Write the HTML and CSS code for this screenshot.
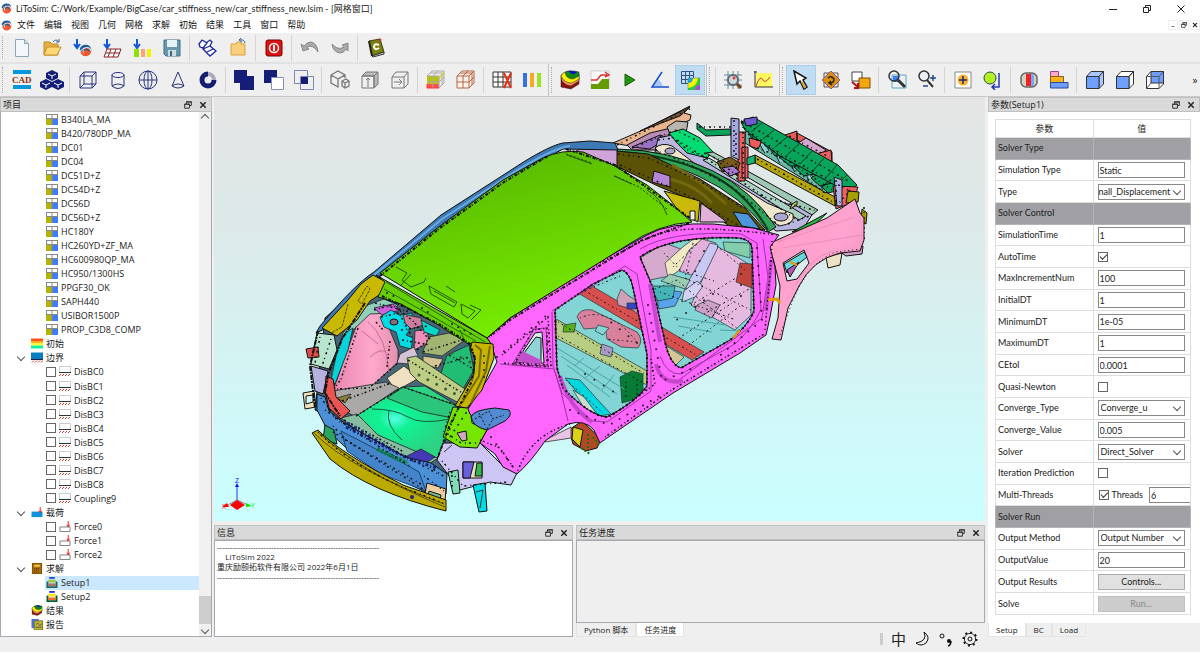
FILE: index.html
```html
<!DOCTYPE html>
<html lang="zh-CN">

<head>
    <meta charset="UTF-8">
    <title>LiToSim</title>
    <link rel="stylesheet" href="styles.css">
</head>

<body>
    <!-- shared icons -->
    <svg class="defs" aria-hidden="true">
        <symbol id="logo" viewBox="0 0 20 20">
            <path d="M2 10 Q3 19 11 19 Q19 18 19 9 L15 13 Q10 17 6 13 L5 9Z" fill="#f0562b" />
            <path d="M1 8 Q3 1 10 1 Q18 1 19 9 Q17 4 12 5 Q7 5 7 9 L4 12Z" fill="#1d5c9e" />
            <path d="M2 11 Q7 4 15 6" stroke="#fff" stroke-width="1.5" fill="none" />
            <circle cx="12" cy="11" r="5" fill="#f0562b" />
            <path d="M8 10 Q12 6 16 11" stroke="#1d5c9e" stroke-width="2" fill="none" />
        </symbol>
        <symbol id="restore" viewBox="0 0 8 8">
            <path d="M2.5 2.5V.8H7.3V4.5H5.5M.7 3H5.4V7.2H.7Z" fill="none" stroke="#333" />
            <path d="M2 1H8M.5 3.3H6" stroke="#333" />
        </symbol>
        <symbol id="close" viewBox="0 0 8 8">
            <path d="M1.3 1.3L6.7 6.7M6.7 1.3L1.3 6.7" stroke="#222" stroke-width="1.5" />
        </symbol>
        <symbol id="material" viewBox="0 0 12 11">
            <rect width="12" height="11" fill="#fff" />
            <rect y="5" width="6" height="6" fill="#b3b300" />
            <rect x="6" y="5" width="6" height="6" fill="#3d7cff" />
            <path d="M0 .5H12M0 4.5H12M.5 0V5M6 0V11M11.5 0V5" stroke="#888" />
        </symbol>
        <symbol id="bc" viewBox="0 0 12 11">
            <path d="M.5 7V.5H11.5V7" fill="#fff" stroke="#ccc" />
            <path d="M0 6.5H12" stroke="#333" />
            <path d="M0 10L2 8M3 10L5 8M6 10L8 8M9 10L11 8" stroke="#d33" />
        </symbol>
        <symbol id="force" viewBox="0 0 12 12">
            <path d="M.5 6.5H11.5V11.5H.5Z" fill="#fff" stroke="#777" />
            <path d="M9.5 0V6M8 4L9.5 6.5L11 4" stroke="#e11" fill="none" />
        </symbol>
        <symbol id="result" viewBox="0 0 20 20">
            <path d="M1 7L19 8V14L11 19L1 17Z" fill="#8a1208" stroke="#222" stroke-width=".5" />
            <path d="M1 7Q2 15 11 16L19 11V5L10 1L1 5Z" fill="#ff9060" stroke="#222" stroke-width=".5" />
            <path d="M1 6Q4 13 12 13L19 9V4L10 1L3 3Z" fill="#fff200" stroke="#222" stroke-width=".5" />
            <path d="M5 2Q6 9 13 9L19 6V2L14 1H8Z" fill="#118a11" stroke="#222" stroke-width=".5" />
            <path d="M9 1Q12 7 17 2L12 1Z" fill="#0909dd" />
        </symbol>
        <symbol id="setup1" viewBox="0 0 12 12">
            <rect x="3" width="6" height="2" fill="#2242dd" />
            <rect x="2" y="3" width="8" height="3" fill="#9bc83c" />
            <rect x="2" y="7" width="8" height="3" fill="#b86d60" />
            <path d="M1 5V11H11V5" fill="none" stroke="#176a62" stroke-width="2" />
        </symbol>
        <symbol id="setup2" viewBox="0 0 12 12">
            <rect x="3" width="6" height="2" fill="#2a2aff" />
            <rect x="2" y="3" width="8" height="3" fill="#f1ea00" />
            <rect x="2" y="7" width="8" height="3" fill="#ff6a20" />
            <path d="M1 5V11H11V5" fill="none" stroke="#0b5e32" stroke-width="2" />
        </symbol>
    </svg>

    <header class="titlebar">
        <svg class="app-icon"><use href="#logo" /></svg>
        <h1>LiToSim: C:/Work/Example/BigCase/car_stiffness_new/car_stiffness_new.lsim - [网格窗口]</h1>
        <div class="window-buttons">
            <button aria-label="最小化"><svg viewBox="0 0 8 8"><path d="M0 4.5H8" stroke="#222" /></svg></button>
            <button aria-label="还原"><svg viewBox="0 0 8 8"><path d="M.5 2.5H5.5V7.5H.5ZM2.5 2V.5H7.5V5.5H6" fill="none" stroke="#222" /></svg></button>
            <button aria-label="关闭"><svg viewBox="0 0 8 8"><path d="M.5 .5L7.5 7.5M7.5 .5L.5 7.5" stroke="#222" /></svg></button>
        </div>
    </header>

    <nav class="menubar">
        <svg class="app-icon"><use href="#logo" /></svg>
        <a href="#">文件</a>
        <a href="#">编辑</a>
        <a href="#">视图</a>
        <a href="#">几何</a>
        <a href="#">网格</a>
        <a href="#">求解</a>
        <a href="#">初始</a>
        <a href="#">结果</a>
        <a href="#">工具</a>
        <a href="#">窗口</a>
        <a href="#">帮助</a>
        <div class="mdi-buttons">
            <button aria-label="最小化子窗口"><svg viewBox="0 0 8 8"><path d="M2 6H6" stroke="#456" /></svg></button>
            <button aria-label="还原子窗口"><svg><use href="#restore" /></svg></button>
            <button aria-label="关闭子窗口"><svg><use href="#close" /></svg></button>
        </div>
    </nav>

    <div class="toolbars file-tools">
        <div class="toolbar">
            <button aria-label="新建"><svg viewBox="0 0 20 20"><path d="M3.500 1.500H12.500L16.500 5.500V18.500H3.500Z" fill="#f4f8fb" stroke="#8ba6b9" /><path d="M12.500 1.500V5.500H16.500" fill="#cfdfe9" stroke="#8ba6b9" /></svg></button>
            <button aria-label="打开"><svg viewBox="0 0 20 20"><path d="M2 17V4H8L10 6H16V17Z" fill="#e6b040" stroke="#c08a28" /><path d="M2 17L5 9H19L15 17Z" fill="#ffd876" stroke="#c98f2a" /><path d="M11 4Q14 0 17 4M17 1V4H14" fill="none" stroke="#34689f" /></svg></button>
            <button aria-label="导入模型"><svg viewBox="0 0 20 20"><path d="M5 1V9M2 6L5 10L8 6" fill="none" stroke="#1455d9" stroke-width="2" /><svg x="7" y="6" width="13" height="13"><use href="#logo" /></svg></svg></button>
            <button aria-label="导入网格"><svg viewBox="0 0 20 20"><path d="M5 1V9M2 6L5 10L8 6" fill="none" stroke="#1455d9" stroke-width="2" /><path d="M5 11H19L16 19H2ZM4 15H18M9 11L6 19M14 11L11 19" fill="#fff" stroke="#8a2222" /></svg></button>
            <button aria-label="导入结果"><svg viewBox="0 0 20 20"><path d="M5 1V9M2 6L5 10L8 6" fill="none" stroke="#1455d9" stroke-width="2" /><path d="M2 11H7V19H2Z" fill="#8ee000" /><path d="M9 11H13V19H9Z" fill="#ffa07a" /><path d="M15 11H19V19H15Z" fill="#f7f000" /></svg></button>
            <button aria-label="保存"><svg viewBox="0 0 20 20"><path d="M2 2H18V18H4L2 16Z" fill="#6799ad" stroke="#3d7087" /><path d="M5 2H15V9H5Z" fill="#e5f2f7" /><path d="M6 12H14V18H6Z" fill="#cfdde3" /><path d="M8 13H10V18H8Z" fill="#3d6478" /></svg></button>
            <i class="sep"></i>
            <button aria-label="清理"><svg viewBox="0 0 20 20"><path d="M7 6L12 2L14 4L12 8L18 13L12 18L5 11Z" fill="#fff" stroke="#1d2a9c" stroke-width="1.300" /><path d="M1 6L4 2L9 5L5 10L2 9ZM5 11L12 8M9 14L15 11" fill="#fff" stroke="#1d2a9c" stroke-width="1.300" /></svg></button>
            <button aria-label="工作目录"><svg viewBox="0 0 20 20"><path d="M3 6H8L9 4H13V6H17V17H3Z" fill="#f7cf7d" stroke="#d9a03f" /><path d="M17 5Q16 1 12 2M13 0L11 2L14 4" fill="none" stroke="#2d5e95" /></svg></button>
            <i class="sep"></i>
            <button aria-label="退出"><svg viewBox="0 0 20 20"><rect x="2" y="2" width="16" height="16" rx="2" fill="#e01010" stroke="#6d0505" /><circle cx="10" cy="10" r="4.500" fill="none" stroke="#fff" stroke-width="1.500" /><path d="M10 7V13" stroke="#fff" stroke-width="2" /></svg></button>
            <i class="sep"></i>
            <button aria-label="撤销"><svg viewBox="0 0 20 20"><path d="M1 6L3 13L9 11L7 9Q13 6 18 14Q17 5 11 4Q7 4 4 8Z" fill="#aaa" stroke="#888" /></svg></button>
            <button aria-label="重做"><svg viewBox="0 0 20 20"><path d="M18 5L12 7L14 9Q8 13 2 6Q3 14 10 15Q14 15 16 11L18 13Z" fill="#aaa" stroke="#888" /></svg></button>
            <i class="sep"></i>
            <button aria-label="计算器"><svg viewBox="0 0 20 20"><path d="M3 3L14 1L18 14L6 18Z" fill="#77810c" stroke="#3d4208" /><path d="M6 18L18 14V16L7 19Z" fill="#ddd" stroke="#333" /><path d="M3 3L6 18" stroke="#222" stroke-width="2" /><path d="M13 7Q8 5 8 9Q9 13 13 10" stroke="#fff" stroke-width="2" fill="none" /><circle cx="14" cy="2" r="1.500" fill="#c33" /></svg></button>
        </div>
    </div>

    <div class="toolbars model-tools">
        <div class="toolbar">
            <button aria-label="CAD"><svg viewBox="0 0 20 20"><path d="M1 0H19V4H1ZM1 15H19V19H1Z" fill="#0797dd" /><text class="cad" x="0" y="13">CAD</text></svg></button>
            <button aria-label="装配"><svg class="wide" viewBox="0 0 24 20"><g id="cube"><path d="M12 0L18 3V8L12 11L6 8V3Z" fill="#141d78" /><path d="M8 4L12 6L16 4M12 6V9" stroke="#fff" fill="none" /></g><use href="#cube" x="-6" y="9" /><use href="#cube" x="6" y="9" /></svg></button>
            <i class="sep"></i>
            <button aria-label="长方体"><svg viewBox="0 0 20 20"><path d="M2 6H14V18H2ZM6 2H18V14H6ZM2 6L6 2M14 6L18 2M14 18L18 14M2 18L6 14" fill="none" stroke="#28327f" /></svg></button>
            <button aria-label="圆柱"><svg viewBox="0 0 20 20"><ellipse cx="10" cy="5" rx="6" ry="2.500" fill="none" stroke="#28327f" /><path d="M4 5V16Q10 21 16 16V5M4 16Q10 12 16 16" fill="none" stroke="#28327f" /></svg></button>
            <button aria-label="球"><svg viewBox="0 0 20 20"><circle cx="10" cy="10" r="9" fill="none" stroke="#28327f" /><ellipse cx="10" cy="10" rx="4" ry="9" fill="none" stroke="#28327f" /><path d="M10 1V19M1 10H19" stroke="#28327f" /></svg></button>
            <button aria-label="圆锥"><svg viewBox="0 0 20 20"><path d="M10 2L16 16Q10 20 4 16ZM4 16Q10 12 16 16" fill="none" stroke="#28327f" /></svg></button>
            <button aria-label="圆环"><svg viewBox="0 0 20 20"><circle cx="10" cy="10" r="6" fill="none" stroke="#aab" stroke-width="4" /><path d="M10 4A6 6 0 1 0 16 10" fill="none" stroke="#14206f" stroke-width="5" /></svg></button>
            <i class="sep"></i>
            <button aria-label="并集"><svg viewBox="0 0 20 20"><path d="M0 0H13V6H20V20H6V13H0Z" fill="#141d78" /></svg></button>
            <button aria-label="差集"><svg viewBox="0 0 20 20"><path d="M0 0H13V13H0Z" fill="#141d78" /><path d="M7.500 7.500H19.500V19.500H7.500Z" fill="#fff" stroke="#8a90bd" /></svg></button>
            <button aria-label="交集"><svg viewBox="0 0 20 20"><path d="M.5 .5H13.500V13.500H.5ZM6.500 6.500H19.500V19.500H6.500Z" fill="none" stroke="#7c84b8" /><path d="M7 7H14V14H7Z" fill="#141d78" /></svg></button>
            <i class="sep"></i>
            <button aria-label="分割"><svg viewBox="0 0 20 20"><path d="M1 5L8 1L15 5V8M1 5V13L8 17V9L15 5M1 5L8 9M12 11L16 9L19 11V16L15 18L12 16ZM12 11L15 13L19 11M15 13V18" fill="none" stroke="#777" stroke-width="1.300" /></svg></button>
            <button aria-label="提取"><svg viewBox="0 0 20 20"><path d="M2 6L6 2H18L14 6ZM14 6V18L18 14V2" fill="#bbb" stroke="#777" /><path d="M2 18V6H14V18ZM8 17V8M6 10L8 8L10 10" fill="none" stroke="#777" /></svg></button>
            <button aria-label="投影"><svg viewBox="0 0 20 20"><path d="M2 7H14V18H2ZM2 7L6 2H18L14 7M18 2V14L14 18M4 12H12M9 9L12 12L9 15" fill="none" stroke="#777" /></svg></button>
            <i class="sep"></i>
            <button aria-label="面网格"><svg viewBox="0 0 20 20"><path d="M1 6L6 1H18V13L13 18H1Z" fill="#eee" /><path d="M1 6H13V18H1Z" fill="#b9c20a" /><path d="M1 14H13V18H1Z" fill="#ff5050" /><path d="M13 6L18 1V5L13 10Z" fill="#e4e452" /><path d="M1 6H13V18M7 6V18M1 12H13M1 6L6 1H18V13L13 18M7 6L12 1M13 12L18 7M4 3H16V15" fill="none" stroke="#aaa" /><path d="M1 18H13M1 14V18" stroke="#f33" /></svg></button>
            <button aria-label="体网格"><svg viewBox="0 0 20 20"><path d="M1 6H13V18H1ZM7 6V18M1 12H13M1 6L6 1H18V13L13 18M13 6L18 1M7 6L12 1M13 12L18 7M4 3H16V15" fill="#fff3ec" stroke="#b56340" /></svg></button>
            <i class="sep"></i>
            <button aria-label="删除网格"><svg viewBox="0 0 20 20"><path d="M1 2H19V17H1ZM6 2V17M11 2V17M1 7H19M1 12H19" fill="#fff" stroke="#333" /><path d="M12 3L19 18M19 3L12 18" stroke="#ee2b0c" stroke-width="2" /></svg></button>
            <button aria-label="网格质量"><svg viewBox="0 0 20 20"><path d="M1 3H5V17H1Z" fill="#3471e4" /><path d="M8 3H12V17H8Z" fill="#f3a923" /><path d="M15 3H19V17H15Z" fill="#9fe222" /></svg></button>
        </div>
        <div class="toolbar">
            <button aria-label="云图"><svg><use href="#result" /></svg></button>
            <button aria-label="曲线"><svg viewBox="0 0 20 20"><path d="M1 1H19V18H1Z" fill="#fff" stroke="#ccc" /><path d="M1 14H8L12 9H19V19H1Z" fill="#639b00" /><path d="M1 10H7L11 5H17M15 2L19 5L15 7" fill="none" stroke="#d33" stroke-width="1.500" /></svg></button>
            <button aria-label="动画"><svg viewBox="0 0 20 20"><path d="M5 4L15 10L5 16Z" fill="#249313" stroke="#145c0a" /></svg></button>
            <button aria-label="测量"><svg viewBox="0 0 20 20"><path d="M3 16L8 9Q12 12 13 16Z" fill="#a6c8f8" /><path d="M12 2L2 17H19" fill="none" stroke="#144ed0" stroke-width="1.500" /></svg></button>
            <button class="on" aria-label="网格云图"><svg viewBox="0 0 20 20"><path d="M1.500 1.500H13.500V13.500H1.500ZM5.500 1V13M9.500 1V13M1 5.500H13M1 9.500H13" fill="none" stroke="#305284" /><path d="M8 8H20V20H8Z" fill="#27d13b" /><path d="M8 8H18Q17 17 8 18Z" fill="#fff000" /><path d="M8 8H13Q13 13 8 13Z" fill="#20a2de" /><path d="M15 20Q15 15 20 15V20Z" fill="#c53de0" /><path d="M8 8H20V20H8Z" fill="none" stroke="#486" stroke-width=".5" /></svg></button>
        </div>
        <div class="toolbar">
            <i class="sep first"></i>
            <button aria-label="查询"><svg viewBox="0 0 20 20"><path d="M1 5H19M1 10H19M1 15H19M5 1V19M10 1V19M15 1V19" stroke="#5b9295" /><circle cx="10" cy="10" r="5" fill="#c9dede" stroke="#667" stroke-width="2" /><path d="M14 14L18 18" stroke="#75411a" stroke-width="3" /><circle cx="11" cy="8" r="1.500" fill="#e33" /></svg></button>
            <button aria-label="绘图"><svg viewBox="0 0 20 20"><path d="M3 3H19V17H3Z" fill="#fff960" /><path d="M2 1V17H20M1 2H4" fill="none" stroke="#333" /><path d="M3 16Q7 4 10 10Q12 14 17 7" fill="none" stroke="#d34" /></svg></button>
        </div>
        <div class="toolbar view-toolbar">
            <button class="on" aria-label="选择"><svg viewBox="0 0 20 20"><path d="M3 1L6 14L9 11L13 19L16 17L12 10L15 8Z" fill="#fff" stroke="#111" stroke-width="1.500" /><path d="M11 12L14 18" stroke="#d99b2a" stroke-width="2" /></svg></button>
            <button aria-label="旋转"><svg viewBox="0 0 20 20"><path d="M3 3H17V17H3Z" fill="#eee" stroke="#555" /><path d="M10 1L19 10L10 19L1 10Z" fill="#d8900d" stroke="#8a5794" /><path d="M7 8Q10 5 13 9Q13 13 9 13M10 11L8 13L11 15" fill="none" stroke="#222" stroke-width="1.500" /></svg></button>
            <button aria-label="平移"><svg viewBox="0 0 20 20"><path d="M1 2H11V11H1Z" fill="#fff" stroke="#444" /><path d="M8 8H19V18H8Z" fill="#f8a60e" stroke="#775000" /><path d="M1 12L7 17M7 13V18H3" stroke="#b01414" stroke-width="2" fill="none" /></svg></button>
            <i class="sep"></i>
            <button aria-label="窗口缩放"><svg viewBox="0 0 20 20"><path d="M5 5H19V18H5Z" fill="none" stroke="#58a9cb" /><path d="M6 6H12V12H6Z" fill="#397cf3" /><circle cx="7" cy="6" r="5" fill="none" stroke="#333" stroke-width="1.500" /><path d="M11 10L18 17" stroke="#333" stroke-width="3" /></svg></button>
            <button aria-label="缩放"><svg viewBox="0 0 20 20"><circle cx="7" cy="6" r="5" fill="#e9eff2" stroke="#333" stroke-width="1.500" /><path d="M10 10L16 17" stroke="#333" stroke-width="2" /><path d="M13 8H19M16 5V11M6 16H11" stroke="#204793" stroke-width="1.500" /></svg></button>
            <i class="sep"></i>
            <button aria-label="适应窗口"><svg viewBox="0 0 20 20"><path d="M2 2H18V18H2Z" fill="#fff" stroke="#888" /><circle cx="10" cy="10" r="5.500" fill="#ffb328" /><path d="M6 10H14M10 6V14" stroke="#172a77" stroke-width="1.500" /></svg></button>
            <button aria-label="重置视图"><svg viewBox="0 0 20 20"><circle cx="7" cy="8" r="6" fill="#b0f321" stroke="#345" /><path d="M16 3V17H10M12 14L9 17L12 20" fill="none" stroke="#2438b1" stroke-width="1.500" /></svg></button>
            <i class="sep"></i>
            <button aria-label="剖切"><svg viewBox="0 0 20 20"><rect x="2" y="3" width="16" height="14" rx="5" fill="#d5d1bd" stroke="#666" stroke-width="1.500" /><path d="M7 4H12V16H7Z" fill="#f32222" /><path d="M12 4H15V16H12Z" fill="#6fa8ff" /></svg></button>
            <button aria-label="对齐"><svg viewBox="0 0 20 20"><path d="M1.500 1.500H9.500V6.500H1.500Z" fill="#ffaac0" stroke="#9a44a5" /><path d="M1.500 6.500H14.500V12.500H1.500Z" fill="#ffb41e" stroke="#876114" /><path d="M1.500 12.500H19V18H1.500Z" fill="#6e9eff" stroke="#2848a0" /></svg></button>
            <i class="sep"></i>
            <button aria-label="实体"><svg viewBox="0 0 20 20"><path d="M1.500 6.500L6 1.500H18.500L14 6.500Z" fill="#a8c6ff" stroke="#333" /><path d="M14 6.500L18.500 1.500V14L14 18.500Z" fill="#a8c6ff" stroke="#333" /><path d="M1.500 6.500H14V18.500H1.500Z" fill="#6e9eff" stroke="#333" /></svg></button>
            <button aria-label="前视"><svg viewBox="0 0 20 20"><path d="M1.500 6.500L6 1.500H18.500L14 6.500ZM14 6.500L18.500 1.500V14L14 18.500Z" fill="#fff" stroke="#333" /><path d="M1.500 6.500H14V18.500H1.500Z" fill="#6e9eff" stroke="#333" /></svg></button>
            <button aria-label="后视"><svg viewBox="0 0 20 20"><path d="M1.500 6.500L6 1.500H18.500V14L14 18.500H1.500Z" fill="#fff" stroke="#333" /><path d="M6 1.500H18.500V13H6Z" fill="#6e9eff" stroke="#333" /><path d="M1.500 6.500H14V18.500M14 6.500L18.500 1.500M1.500 18.500L6 13" fill="none" stroke="#555" /></svg></button>
            <button class="more" aria-label="更多">»</button>
        </div>
    </div>

    <main class="workspace">
        <aside class="dock project">
            <header class="dock-title">
                <h2>项目</h2>
                <button aria-label="浮动"><svg><use href="#restore" /></svg></button>
                <button aria-label="关闭"><svg><use href="#close" /></svg></button>
            </header>
            <div class="dock-body tree-body">
                <ul class="tree">
                    <li class="leaf"><svg><use href="#material" /></svg>B340LA_MA</li>
                    <li class="leaf"><svg><use href="#material" /></svg>B420/780DP_MA</li>
                    <li class="leaf"><svg><use href="#material" /></svg>DC01</li>
                    <li class="leaf"><svg><use href="#material" /></svg>DC04</li>
                    <li class="leaf"><svg><use href="#material" /></svg>DC51D+Z</li>
                    <li class="leaf"><svg><use href="#material" /></svg>DC54D+Z</li>
                    <li class="leaf"><svg><use href="#material" /></svg>DC56D</li>
                    <li class="leaf"><svg><use href="#material" /></svg>DC56D+Z</li>
                    <li class="leaf"><svg><use href="#material" /></svg>HC180Y</li>
                    <li class="leaf"><svg><use href="#material" /></svg>HC260YD+ZF_MA</li>
                    <li class="leaf"><svg><use href="#material" /></svg>HC600980QP_MA</li>
                    <li class="leaf"><svg><use href="#material" /></svg>HC950/1300HS</li>
                    <li class="leaf"><svg><use href="#material" /></svg>PPGF30_OK</li>
                    <li class="leaf"><svg><use href="#material" /></svg>SAPH440</li>
                    <li class="leaf"><svg><use href="#material" /></svg>USIBOR1500P</li>
                    <li class="leaf"><svg><use href="#material" /></svg>PROP_C3D8_COMP</li>
                    <li class="branch"><i class="toggle"></i><svg viewBox="0 0 12 10"><path d="M0 0H12V3H0Z" fill="#ff5310" /><path d="M0 3H12V5H0Z" fill="#ffb300" /><path d="M0 5H12V7H0Z" fill="#ffff28" /><path d="M0 7H12V10H0Z" fill="#13f0a0" /></svg>初始</li>
                    <li class="branch"><i class="toggle open"></i><svg viewBox="0 0 12 10"><path d="M0 0H12V7H0Z" fill="#087fc0" /><path d="M0 7H12" stroke="#224" /><path d="M1 10L3 8M4 10L6 8M7 10L9 8M10 10L12 8" stroke="#d33" /></svg>边界</li>
                    <li class="leaf"><label><input type="checkbox"><svg><use href="#bc" /></svg>DisBC0</label></li>
                    <li class="leaf"><label><input type="checkbox"><svg><use href="#bc" /></svg>DisBC1</label></li>
                    <li class="leaf"><label><input type="checkbox"><svg><use href="#bc" /></svg>DisBC2</label></li>
                    <li class="leaf"><label><input type="checkbox"><svg><use href="#bc" /></svg>DisBC3</label></li>
                    <li class="leaf"><label><input type="checkbox"><svg><use href="#bc" /></svg>DisBC4</label></li>
                    <li class="leaf"><label><input type="checkbox"><svg><use href="#bc" /></svg>DisBC5</label></li>
                    <li class="leaf"><label><input type="checkbox"><svg><use href="#bc" /></svg>DisBC6</label></li>
                    <li class="leaf"><label><input type="checkbox"><svg><use href="#bc" /></svg>DisBC7</label></li>
                    <li class="leaf"><label><input type="checkbox"><svg><use href="#bc" /></svg>DisBC8</label></li>
                    <li class="leaf"><label><input type="checkbox"><svg><use href="#bc" /></svg>Coupling9</label></li>
                    <li class="branch"><i class="toggle open"></i><svg viewBox="0 0 12 12"><path d="M0 5H12V11H0Z" fill="#0a92dc" /><path d="M9.500 0V6M8 4L9.500 6L11 4" stroke="#e11" fill="none" /></svg>载荷</li>
                    <li class="leaf"><label><input type="checkbox"><svg><use href="#force" /></svg>Force0</label></li>
                    <li class="leaf"><label><input type="checkbox"><svg><use href="#force" /></svg>Force1</label></li>
                    <li class="leaf"><label><input type="checkbox"><svg><use href="#force" /></svg>Force2</label></li>
                    <li class="branch"><i class="toggle open"></i><svg viewBox="0 0 12 12"><path d="M1 0H11V12H1Z" fill="#b06f05" stroke="#6d4300" /><path d="M3 2H9V4H3Z" fill="#f5ce58" /><path d="M3 6H9M3 8H9M3 10H9" stroke="#442a00" stroke-dasharray="1 1" /></svg>求解</li>
                    <li class="leaf selected"><svg><use href="#setup1" /></svg>Setup1</li>
                    <li class="leaf"><svg><use href="#setup2" /></svg>Setup2</li>
                    <li class="branch"><i class="toggle"></i><svg><use href="#result" /></svg>结果</li>
                    <li class="branch"><i class="toggle"></i><svg viewBox="0 0 12 12"><path d="M0 0H8V10H0Z" fill="#4b70e0" /><path d="M3 2H12V12H3Z" fill="#c2b82c" stroke="#787021" /><path d="M5 6Q7 3 8 6T11 5M4 9H11" fill="none" stroke="#555" /></svg>报告</li>
                </ul>
                <div class="scrollbar">
                    <i class="arrow up"></i>
                    <i class="thumb"></i>
                    <i class="arrow down"></i>
                </div>
            </div>
        </aside>

        <section class="center">
            <div class="viewport">
                <svg class="car" viewBox="214 97 771 424" role="img" aria-label="车身有限元模型">
                    <defs>
                        <linearGradient id="roofFill" x1="0" y1="0" x2=".4" y2="1">
                            <stop offset="0" stop-color="#4fae00" />
                            <stop offset=".3" stop-color="#5fc300" />
                            <stop offset="1" stop-color="#78ee00" />
                        </linearGradient>
                        <linearGradient id="fenderFill" x1="0" y1="0" x2="1" y2="1">
                            <stop offset="0" stop-color="#ff9ac4" />
                            <stop offset=".5" stop-color="#ffa3d0" />
                            <stop offset="1" stop-color="#e88bb8" />
                        </linearGradient>
                        <linearGradient id="pinkFill">
                            <stop offset="0" stop-color="#e885b0" />
                            <stop offset=".6" stop-color="#ffa8cc" />
                            <stop offset="1" stop-color="#e58fb0" />
                        </linearGradient>
                        <radialGradient id="floorFill" cx=".38" cy=".45" r=".5">
                            <stop offset="0" stop-color="#55ffe8" />
                            <stop offset=".3" stop-color="#10f294" />
                            <stop offset="1" stop-color="#2bd383" />
                        </radialGradient>
                    </defs>

                    <!-- front end -->
                    <g stroke="#111">
                        <path d="M613 143L643 130L690 106L684 113L691 115L690 120L663 131L630 146Z" fill="#e9b58e" />
                        <path d="M640 131L690 107L680 116Z" fill="#72543d" />
                        <path d="M627 145L650 133L671 128L673 138L655 150L632 150Z" fill="#b98bb7" />
                        <path d="M632 147L660 135L668 138L650 149Z" fill="#9a72c4" />
                        <path d="M667 127L676 121L688 122L686 133L670 134Z" fill="#b9b5b0" />
                        <path d="M697 123L706 130L731 129V135L706 136L697 129Z" fill="#08a258" />
                        <path d="M658 138L672 135L700 155L737 173L770 200L815 210L803 229L776 231L730 192L690 168L655 152Z" fill="#b9b7e0" />
                        <path d="M669 133L683 129L700 138L713 152L707 158L687 153L677 143Z" fill="#00dc73" />
                        <path d="M706 153L713 152L818 210L812 215Z" fill="#9fc8b4" />
                        <path d="M703 160L709 158L806 216L799 220Z" fill="#a9d0c0" />
                        <path d="M655 148Q662 142 672 146L694 163L730 180L767 203L793 214Q796 224 779 226L742 199L690 168L664 158Z" fill="#f0e6cd" />
                        <ellipse cx="670" cy="151" rx="5" ry="3" fill="#aaa6c8" />
                        <ellipse cx="781" cy="217" rx="7" ry="4" fill="#a9a6cf" />
                        <path d="M617 149Q670 150 713 171Q752 190 776 227L768 232Q742 196 698 176Q665 160 617 157Z" fill="#30a55a" />
                        <path d="M620 152Q668 155 710 174Q746 192 768 230" fill="none" stroke="#0a3b1b" stroke-width="2" />
                        <path d="M616 151L648 154L700 179L745 208L765 230H735L692 200L660 187L616 166Z" fill="#5c5203" />
                        <path d="M672 165Q700 180 726 204M660 178Q690 180 712 203" fill="none" stroke="#75690e" stroke-width="3" />
                        <path d="M590 142L617 149V166L605 163L575 152Z" fill="#cfa4d8" />
                        <path d="M654 171L670 176V187L652 182Z" fill="#b586d6" />
                        <path d="M664 191L700 201L698 222L680 213Z" fill="#c8b90b" />
                        <path d="M701 203L727 222L700 222Z" fill="#e1b1d9" />
                        <path d="M733 212L748 214L760 229L742 226Z" fill="#4e96dc" />
                        <path d="M690 211H695V220H690Z" fill="#eee" />
                        <path d="M792 232L827 213L812 227Z" fill="#29b83c" />
                        <path d="M792 204L797 201L797 205L790 209Z" fill="#b7c763" />
                    </g>
                    <g stroke="#111">
                        <path d="M782 136L797 131V155L787 154ZM797 133L832 152V164L825 160V153L797 141Z" fill="#e65a5a" />
                        <path d="M798 143L806 138L826 150L820 155Z" fill="#d4a6cb" />
                        <path d="M812 155L831 150L832 165L822 168Z" fill="#f06060" />
                        <path d="M755 155L835 197V206L755 163Z" fill="#b5a50c" />
                        <path d="M745 132L752 129L832 187L826 193L745 143Z" fill="#6ab9a6" />
                        <path d="M760 140l7 12M775 147l7 15M790 156l7 15M804 164l7 15M818 174l7 15" stroke="#1b3030" stroke-width="6" />
                        <path d="M760 140l7 12M775 147l7 15M790 156l7 15M804 164l7 15M818 174l7 15" stroke="#89d4d0" stroke-width="4" />
                        <path d="M747 129L760 131L768 141L752 139ZM768 146L781 144L791 155L775 156ZM779 157L790 152L804 166L790 166ZM794 167L806 160L818 173L804 176ZM811 178L824 170L832 183L820 186ZM822 187L832 178L840 190L828 193Z" fill="#07a45c" />
                        <path d="M749 138L762 141L758 149L750 146Z" fill="#ef5b5b" />
                        <path d="M741 122L753 117L838 165L857 185L848 192L827 181L780 156L745 130Z" fill="#07a45c" />
                        <path d="M762 123l-11 9M774 130l-11 9M787 137l-12 10M799 144l-12 11M812 151l-12 13M824 158l-12 14M837 165l-12 14M847 175l-10 10" stroke="#063b20" fill="none" />
                        <path d="M738 132H745V181H738ZM742 147H748V178H742Z" fill="#f05f5f" />
                        <path d="M731 118L739 119V160L731 156Z" fill="#a5a8de" />
                        <path d="M744 119L757 117V124L746 126Z" fill="#715ad4" />
                        <path d="M747 158L755 155V163L747 165Z" fill="#12b778" />
                        <path d="M833 186L858 187L853 202L836 209Z" fill="#f06060" />
                        <path d="M834 177L842 180V206L837 206Z" fill="#b1b5e6" />
                        <path d="M848 191L859 192L858 202L846 203Z" fill="#a6a000" />
                        <path d="M862 209L867 213L866 224L861 222Z" fill="#a6a000" />
                        <path d="M839 251L863 246L862 254L846 256Z" fill="#d29fd0" />
                        <path d="M826 257L842 253L840 265L828 268Z" fill="#eee2c4" />
                        <path d="M717 162L730 157L740 163L736 174L722 171Z" fill="#775a18" />
                        <path d="M722 168L733 166L740 172L730 176Z" fill="#a778cf" />
                    </g>
                    <g fill="none" stroke="#151515" stroke-width="1.500" stroke-dasharray="2 3 1 4">
                        <path d="M617 145L665 121L690 109M632 148L671 132M655 150L690 165L732 187L782 228" />
                        <path d="M658 140L674 138L704 157L765 197L817 211M668 134L689 151L709 158M699 127H731" />
                        <path d="M618 154L648 158L700 181L743 208M620 165L663 184L695 199L739 226" />
                        <path d="M741 121L850 182M748 134L832 190M757 159L833 202M789 136l40 21M734 120V158M743 122V178M850 190L838 204M864 207V240" />
                        <path d="M744 128L778 152L826 178L848 190M757 148L776 155L826 194M736 133V177M836 180V208" />
                        <path d="M704 153L738 168M720 163L741 178M760 195L800 222M788 224L812 215M675 130L700 142" />
                    </g>

                    <!-- front fender -->
                    <path d="M768 244L793 233L827 218L855 199L860 213L864 218V240L860 251L840 253Q812 260 799 286L788 308L781 340L772 339L778 318L780 286L774 262ZM783 263L804 250L809 263L797 279L787 281Z" fill="url(#fenderFill)" fill-rule="evenodd" stroke="#111" />
                    <path d="M784 264L804 252L807 257L787 273Z" fill="#67d8dd" stroke="#111" />
                    <path d="M787 270L799 262L790 277Z" fill="#b658b8" stroke="#111" />
                    <path d="M790 262L797 265" stroke="#e49a09" stroke-width="2" />
                    <path d="M777 242L855 217M782 248L862 235M833 251Q810 257 795 286" fill="none" stroke="#eb8fbb" />
                    <path d="M780 335L790 308Q806 263 836 252L861 249" fill="none" stroke="#111" stroke-dasharray="1 3" />

                    <!-- passenger compartment seen through the doors -->
                    <path d="M550 300L640 235H760V335L670 380L600 425L553 395Z" fill="#82d5d4" />
                    <g stroke="#233" stroke-width=".7">
                        <path d="M640 258L665 243L683 250L669 276L650 280Z" fill="#d6a9cf" />
                        <path d="M665 263L684 246L695 238L708 239L693 261L668 278Z" fill="#f1e9c4" />
                        <path d="M689 250L702 239L716 243L706 260L694 276L679 271Z" fill="#e2b0da" />
                        <path d="M710 243L718 245L716 258L695 290L684 289L700 261Z" fill="#c9c8f5" />
                        <path d="M723 242L750 243V258L725 251Z" fill="#83cfac" />
                        <path d="M718 247L739 258L751 266V315L735 330L691 305L704 276Z" fill="#e5b9e0" />
                        <path d="M740 263L752 264V288L736 282Z" fill="#c0433c" />
                        <path d="M661 281L670 274L690 280L685 289Z" fill="#99cdb3" />
                        <path d="M655 288L682 292L675 306L659 309Z" fill="#59a3ed" />
                        <path d="M650 286L675 286L673 298L658 301Z" fill="#44b6b8" />
                        <path d="M684 291L697 281L703 286L695 297L682 302Z" fill="#d3d1f5" />
                        <path d="M697 305L708 300L720 305L712 318L695 310Z" fill="#cca0c7" />
                        <path d="M578 293L592 286L704 352L692 360Z" fill="#d84f4f" />
                        <path d="M617 299L621 289L629 296L641 303L638 314L631 309L618 305Z" fill="#cda1b8" />
                        <path d="M627 303h10v6h-10Z" fill="#3844c5" />
                        <path d="M577 317Q580 308 592 310L637 332Q644 340 638 348L621 347L607 339L606 332L596 328L584 329Z" fill="#d8809c" />
                        <path d="M598 325L609 328L603 335L595 331Z" fill="#82d5d4" />
                        <path d="M556 319L647 371V385L556 338Z" fill="#b7cd82" />
                        <path d="M564 325L576 323L574 332L563 332Z" fill="#59af17" />
                        <path d="M602 344L613 348L611 357L600 354Z" fill="#a99ac6" />
                        <path d="M620 377L632 371L643 374V397L622 403Z" fill="#077c36" />
                        <path d="M565 378L580 380L597 399L611 414L599 416L581 397Z" fill="#00d8e0" />
                        <path d="M573 390L584 397L597 414L584 408Z" fill="#c9ddd0" />
                        <path d="M663 344L684 357L675 366L665 357Z" fill="#d4c797" />
                    </g>
                    <path d="M557 348L624 389M561 356L617 394M567 365L610 397M584 358L574 366M600 366L585 378M614 375L602 390M673 317L726 325M678 326L712 332M720 330L742 331" fill="none" stroke="#4ca4a8" />
                    <g fill="none" stroke="#111" stroke-dasharray="1 3 2 3">
                        <path d="M569 297L620 276M558 322L645 374M558 336L642 382M585 291L698 356M580 318Q608 305 637 342L606 339M566 380L603 413" />
                        <path d="M664 253L680 270L714 281M673 267L697 244M694 239L685 278L751 310M717 246L745 270M691 305L736 278M704 314L749 289M655 289L677 280L700 300L742 332" />
                        <path d="M679 338L732 303M689 345L740 306M626 382V399M637 380V396M660 292L736 320" />
                    </g>
                    <path d="M585 374L622 397M637 343L607 319M713 294L675 321M704 251L693 276M741 274V300" stroke="#222" stroke-width="2" stroke-linecap="round" stroke-dasharray="0 11" />
                    <path d="M569 430L582 421L601 439L597 448L586 451L573 444Z" fill="#b34826" stroke="#111" />
                    <path d="M573 427L583 430L580 447L572 439Z" fill="#dbd216" stroke="#111" />
                    <path d="M545 440L571 427L571 438L545 442Z" fill="#eac4e5" stroke="#555" />
                    <path d="M588 434v15M593 437l6 8M581 448l9 6" stroke="#171" stroke-width="2" stroke-dasharray="2 2" />

                    <!-- rear compartment -->
                    <path d="M325 318L373 275L480 340L475 390L445 475L315 410Z" fill="#476779" stroke="#111" />
                    <g stroke="#222" stroke-width=".8">
                        <path d="M356 327L370 309L382 312L391 333L398 350V362L386 373L369 389L333 391L344 359Z" fill="url(#pinkFill)" />
                        <path d="M365 306L384 299L398 305L389 313L370 314L353 330L337 379L331 374L343 333Z" fill="#8fd0bd" />
                        <path d="M353 328L348 350L335 384L331 380L338 347L345 333Z" fill="#09d2d8" />
                        <path d="M374 308L393 304L401 310L382 315Z" fill="#cf62dc" />
                        <path d="M380 317L391 310L399 315L412 313V327L406 335L413 338L411 349L400 346L396 332L384 327Z" fill="#00dce3" />
                        <path d="M403 314L421 318L423 325L411 329L405 323Z" fill="#cd7d9d" />
                        <path d="M415 331L427 329L429 343L414 350Z" fill="#ed8fb8" />
                        <path d="M421 320L440 330L436 336L424 332Z" fill="#08d5c8" />
                        <path d="M429 337L449 333L465 340L442 356L422 353Z" fill="#a2b471" />
                        <path d="M447 355L469 345L474 370L463 389L440 376Z" fill="#22bd74" />
                        <path d="M423 356L443 359L438 368L423 365Z" fill="#d3c694" />
                        <path d="M387 378L404 366L419 378L396 391Z" fill="#eee0c0" />
                        <path d="M400 354L414 347L418 356L409 364L397 363Z" fill="#d4c3d4" />
                        <path d="M407 358L416 356L465 389L459 403L419 382L410 373Z" fill="#bdcd83" />
                        <path d="M333 391L386 382L399 388L356 417L341 409Z" fill="#aaa9a8" />
                        <path d="M337 398L351 394L345 403Z" fill="#8d813d" />
                        <path d="M356 416L402 387L425 386L458 406L449 430L439 459L404 451L368 433Z" fill="url(#floorFill)" />
                        <path d="M403 387L458 406L453 418L422 412L387 398Z" fill="#2cc57c" />
                        <path d="M341 418L357 414L378 435L415 451L438 458L429 464L375 445Z" fill="#86bc9f" />
                        <path d="M407 456L421 449L435 457L426 463L414 461Z" fill="#4438b9" />
                    </g>
                    <ellipse cx="394" cy="322" rx="4" ry="3" fill="#8a6a80" stroke="#111" />
                    <path d="M368 322Q386 336 389 372M362 331L378 344M370 357Q380 348 386 352" fill="none" stroke="#c76f94" />
                    <g fill="none" stroke="#111" stroke-width="1.500" stroke-dasharray="2 3 1 2">
                        <path d="M374 310L392 305L412 320L427 337M381 317L399 313L412 337M358 328L341 379L334 389L369 388L398 363M408 360L464 394L458 402" />
                        <path d="M423 352L462 340M449 355L472 368M342 401L391 383M356 416L403 387L456 405M344 420L404 452" />
                        <path d="M390 341L387 367M376 322L384 331M435 366L470 357M417 350L432 336M375 303L410 312M401 330L428 326M402 340L430 345" />
                    </g>
                    <path d="M372 409Q395 409 408 417T450 419M389 410Q385 425 402 440" fill="none" stroke="#175c3c" />
                    <path d="M419 375L461 397M452 353L470 362" stroke="#3c5d35" stroke-width="3" stroke-linecap="round" stroke-dasharray="0 10" />

                    <!-- rear body panels -->
                    <g stroke="#111">
                        <path d="M317 333L334 335L337 350L329 369L311 364Z" fill="#b8e5ce" />
                        <path d="M311 366L328 371L323 394L315 391Z" fill="#b5b2df" />
                        <path d="M306 349L318 347L319 357L308 358Z" fill="#e24c45" />
                        <path d="M303 393L314 391L316 407L305 409ZM306 396V404L313 402V395Z" fill="#eee1bb" fill-rule="evenodd" />
                        <path d="M326 376L333 379L336 397L350 411L341 419L329 408L325 391Z" fill="#ec5451" />
                        <path d="M317 394L325 397L329 411L343 422L405 457L431 463L447 474L446 494L425 492L356 457L328 431L317 410Z" fill="#4c91d7" />
                        <path d="M341 431L405 464L419 472L426 491L381 474L347 451Z" fill="#4384cb" stroke="#1d426d" />
                        <path d="M325 425L334 430L337 444L323 439Z" fill="#29a75f" />
                        <path d="M427 483L446 489L445 501L425 494Z" fill="#edcda1" />
                        <path d="M429 491L441 495L440 501L428 497Z" fill="#7dbb95" />
                        <path d="M443 443L480 443L504 467L517 473L511 485L490 482L460 490L437 460Z" fill="#cdc5f4" />
                        <path d="M448 472L458 470L460 493L453 494Z" fill="#81dbb6" />
                        <path d="M463 462H482V478H463Z" fill="#e8e0bf" />
                        <path d="M463 462H474L470 478H463Z" fill="#6a5fdf" />
                        <path d="M477 463H482V476H475Z" fill="#39b34d" />
                        <path d="M473 485L485 483L487 511L479 512Z" fill="#00dce4" />
                        <path d="M453 407L470 408L472 423L487 430L477 448L460 447L443 437Z" fill="#76e600" />
                        <path d="M457 433L466 431L467 440L462 441Z" fill="#d2a8c0" />
                        <path d="M312 433L318 430Q340 453 403 485L446 500V511Q370 492 330 459Z" fill="#bbaa00" />
                    </g>
                    <path d="M314 433Q350 469 444 504M318 432Q360 472 445 507" fill="none" stroke="#594f00" />
                    <path d="M346 427L409 459L437 468M347 423L396 452" fill="none" stroke="#1d2381" stroke-width="3" stroke-dasharray="3 2 1 2" />
                    <path d="M377 449L407 463" stroke="#087c40" stroke-width="4" stroke-dasharray="3 1" />
                    <path d="M444 452L452 445M476 492L483 490L480 508" fill="none" stroke="#333" />
                    <g fill="none" stroke="#111" stroke-width="1.500" stroke-dasharray="1 3 2 4">
                        <path d="M320 337L315 363M331 339L322 366M321 398L337 420L386 446L440 475M333 426L346 440L424 486M333 432L426 491M442 461L463 486L508 482M455 415L448 434L461 443L477 443M452 471V489" />
                        <path d="M318 432Q350 464 402 487L443 503M325 410L362 436L410 466M430 467L446 478M424 476L444 491M450 412L444 432" />
                    </g>
                    <circle cx="412" cy="497" r="2" fill="#242081" />

                    <!-- body side with door and quarter window openings -->
                    <path d="M487 338L510 318L590 267L647 235Q670 222 713 224L753 228L779 235L770 247L775 267L776 285L770 317L766 335L740 353L673 393L607 438L600 443L594 430Q585 419 568 424L545 441Q530 463 517 474L503 467L495 454L480 443L487 430L470 414L468 409L487 380L497 362L491 344Z M516 362L535 333L542 332L544 363Z M555 310L593 284L622 270Q630 273 633 288L647 354V386Q636 402 607 417Q590 416 563 388L557 368Z M640 257Q670 235 739 238Q752 240 752 249L754 311Q748 326 730 340L681 368Q670 365 665 342L653 288Z" fill="#ff65ff" fill-rule="evenodd" stroke="#111" />
                    <path d="M518 361L536 337L541 338V362Z" fill="#90d4d7" stroke="#111" />
                    <path d="M520 350L541 360V364L517 362Z" fill="#c44fcd" />
                    <g fill="none" stroke="#9d34a4">
                        <path d="M513 363L534 329L546 328L548 366L513 365M552 311L625 266L637 274L651 350V391L607 422M552 312L553 366L562 393L592 421L607 422" />
                        <path d="M640 249Q672 230 741 234L757 243L761 309Q754 326 735 344L681 374Q667 375 660 356M763 239L768 277L762 318L679 380M500 364L554 369L561 392L568 421" />
                        <path d="M560 376Q569 407 592 422M656 364Q661 385 683 381M650 284L660 342M771 260L766 311" stroke="#c746ce" stroke-width="4" />
                    </g>
                    <g fill="none" stroke="#111" stroke-width="1.500" stroke-dasharray="1 2 2 3">
                        <path d="M487 338L511 317L592 267L650 237Q680 222 777 235" />
                        <path d="M502 355L548 317L551 367L502 363M515 363L533 330L547 328L547 365Z" />
                        <path d="M555 310L593 284L622 270Q630 273 633 288L647 354V386Q636 402 607 417Q590 416 563 388L557 368Z" stroke-width="2" />
                        <path d="M640 257Q670 235 739 238Q752 240 752 249L754 311Q748 326 730 340L681 368Q670 365 665 342L653 288Z" stroke-width="2" />
                        <path d="M605 437L670 391L764 334M772 241L771 262L765 330M651 359L655 384L610 417M480 440L500 448L515 470M570 424Q530 435 517 473" />
                    </g>
                    <path d="M497 357L546 316M548 342V365M648 305L662 381L691 369M757 248L762 320L718 357M570 410L609 425L661 395M491 437L513 467" stroke="#281328" stroke-width="2" stroke-linecap="round" stroke-dasharray="0 9" fill="none" />
                    <path d="M471 417Q473 410 495 408L509 410Q513 415 505 421L487 430Q473 427 471 417Z" fill="#538bd2" stroke="#111" />
                    <path d="M475 419L489 411L493 419L504 415M487 429L493 419M479 413L485 425" fill="none" stroke="#111" stroke-dasharray="2 2" />
                    <path d="M768 300L777 299L780 303" fill="none" stroke="#e49a09" stroke-width="3" />
                    <path d="M733 338L740 330" fill="none" stroke="#e49a09" stroke-width="2" />

                    <!-- roof, rails and rear header -->
                    <path d="M320 326Q355 284 374 272L441 215L508 172Q547 146 563 143L590 141L615 143L618 150L563 149L507 180L380 276L329 327L316 333Z" fill="#3d79b5" stroke="#111" />
                    <path d="M374 275L442 219L508 176Q550 149 570 146" fill="none" stroke="#69abe1" stroke-width="2" />
                    <path d="M373 275L386 282L382 293L370 301L357 320L337 336L322 328L348 300L361 284Z" fill="#c9b900" stroke="#111" />
                    <path d="M358 301L367 286L370 289L362 304ZM348 304L342 327L331 333" fill="none" stroke="#524b00" stroke-dasharray="3 1" />
                    <path d="M380 273L440 226L503 180L543 158Q562 149 583 152L613 165L647 185L670 203L692 222Q658 224 626 246L510 318L487 338Z" fill="url(#roofFill)" stroke="#111" />
                    <path d="M376 275L487 338L494 348L482 353L470 345L440 326L401 304L378 297L385 282Z" fill="#66cf00" stroke="#111" />
                    <path d="M384 289L476 341M386 282L485 342M460 330L465 342" fill="none" stroke="#286b00" />
                    <path d="M472 342L493 344L494 358L482 390L467 408L455 406L474 374L475 356L470 350Z" fill="#c9b500" stroke="#111" />
                    <path d="M475 345L481 350L479 376L462 403M490 346L486 371L471 403" fill="none" stroke="#756b00" stroke-width="2" />
                    <path d="M396 267L407 273L402 280L411 287L424 282L426 278M411 274L401 285M429 286L457 302L454 307L431 294ZM434 291L455 303M461 304L475 311L468 318L462 314ZM470 305L481 310L471 320M446 286l9 6M567 155L592 164M614 176L632 184M647 190Q661 198 667 215" fill="none" stroke="#265600" />
                    <path d="M566 154L592 163M615 176L639 187L667 209" fill="none" stroke="#193b00" stroke-dasharray="2 2" />
                    <path d="M380 276L440 228L504 182L548 156M566 149L615 165L690 218M689 223L640 241L510 320L489 337M382 296L441 325L470 344L475 359L472 381L449 427L438 457" fill="none" stroke="#111" stroke-width="2" stroke-dasharray="3 1 1 2" />
                    <path d="M365 303L342 339L328 375L325 393L340 416M318 331L310 366L315 408" fill="none" stroke="#111" stroke-width="2" stroke-dasharray="5 1 2 1" />
                    <path d="M387 293L398 298M422 308L431 314M452 324L473 335M484 356V380M466 413L450 437" stroke="#225" stroke-width="2" stroke-linecap="round" stroke-dasharray="0 7" />

                    <!-- axis triad -->
                    <path d="M237 485V500" stroke="#3030ff" />
                    <path d="M235 487L237 483L239 487Z" fill="#1010ff" />
                    <path d="M237 500L226 506M237 500L248 505" stroke="#888" fill="none" />
                    <path d="M230 505L237 500L245 505L237 510Z" fill="#f00" />
                    <path d="M222 507L227 503L229 507Z" fill="#f00" />
                    <path d="M246 503L252 506L246 507Z" fill="#00e800" />
                    <text class="axis" x="235" y="483" fill="#2222ff">Z</text>
                    <text class="axis" x="222" y="509" fill="#f00">X</text>
                    <text class="axis" x="251" y="508" fill="#00e800">Y</text>
                </svg>
            </div>
            <div class="lower">
                <section class="dock info">
                    <header class="dock-title">
                        <h2>信息</h2>
                        <button aria-label="浮动"><svg><use href="#restore" /></svg></button>
                        <button aria-label="关闭"><svg><use href="#close" /></svg></button>
                    </header>
                    <pre class="dock-body log">---------------------------------------------------------------
    LiToSim 2022
重庆励颐拓软件有限公司 2022年6月1日
---------------------------------------------------------------</pre>
                </section>
                <section class="dock tasks">
                    <header class="dock-title">
                        <h2>任务进度</h2>
                        <button aria-label="浮动"><svg><use href="#restore" /></svg></button>
                        <button aria-label="关闭"><svg><use href="#close" /></svg></button>
                    </header>
                    <div class="dock-body"></div>
                    <div class="tabs">
                        <button>Python 脚本</button>
                        <button class="active">任务进度</button>
                    </div>
                </section>
            </div>
        </section>

        <aside class="dock params">
            <header class="dock-title">
                <h2>参数(Setup1)</h2>
                <button aria-label="浮动"><svg><use href="#restore" /></svg></button>
                <button aria-label="关闭"><svg><use href="#close" /></svg></button>
            </header>
            <div class="params-body">
                <table>
                    <thead>
                        <tr><th>参数</th><th>值</th></tr>
                    </thead>
                    <tbody>
                        <tr class="group"><td>Solver Type</td><td></td></tr>
                        <tr><td><label for="simType">Simulation Type</label></td><td><input type="text" id="simType" value="Static"></td></tr>
                        <tr><td><label for="type">Type</label></td><td><span class="select clipped"><select id="type"><option>nall_Displacement</option></select></span></td></tr>
                        <tr class="group"><td>Solver Control</td><td></td></tr>
                        <tr><td><label for="simTime">SimulationTime</label></td><td><input type="text" id="simTime" value="1"></td></tr>
                        <tr><td><label for="autoTime">AutoTime</label></td><td><input type="checkbox" id="autoTime" checked></td></tr>
                        <tr><td><label for="maxInc">MaxIncrementNum</label></td><td><input type="text" id="maxInc" value="100"></td></tr>
                        <tr><td><label for="initialDT">InitialDT</label></td><td><input type="text" id="initialDT" value="1"></td></tr>
                        <tr><td><label for="minDT">MinimumDT</label></td><td><input type="text" id="minDT" value="1e-05"></td></tr>
                        <tr><td><label for="maxDT">MaximumDT</label></td><td><input type="text" id="maxDT" value="1"></td></tr>
                        <tr><td><label for="cetol">CEtol</label></td><td><input type="text" id="cetol" value="0.0001"></td></tr>
                        <tr><td><label for="quasi">Quasi-Newton</label></td><td><input type="checkbox" id="quasi"></td></tr>
                        <tr><td><label for="convType">Converge_Type</label></td><td><span class="select"><select id="convType"><option>Converge_u</option></select></span></td></tr>
                        <tr><td><label for="convValue">Converge_Value</label></td><td><input type="text" id="convValue" value="0.005"></td></tr>
                        <tr><td><label for="solver">Solver</label></td><td><span class="select"><select id="solver"><option>Direct_Solver</option></select></span></td></tr>
                        <tr><td><label for="iter">Iteration Prediction</label></td><td><input type="checkbox" id="iter"></td></tr>
                        <tr><td>Multi-Threads</td><td class="threads"><div><input type="checkbox" id="threads" checked><label for="threads">Threads</label><input type="text" value="6" aria-label="线程数"></div></td></tr>
                        <tr class="group"><td>Solver Run</td><td></td></tr>
                        <tr><td><label for="outMethod">Output Method</label></td><td><span class="select"><select id="outMethod"><option>Output Number</option></select></span></td></tr>
                        <tr><td><label for="outValue">OutputValue</label></td><td><input type="text" id="outValue" value="20"></td></tr>
                        <tr><td>Output Results</td><td><button>Controls...</button></td></tr>
                        <tr><td>Solve</td><td><button disabled>Run...</button></td></tr>
                    </tbody>
                </table>
            </div>
            <div class="tabs">
                <button class="active">Setup</button>
                <button>BC</button>
                <button>Load</button>
            </div>
        </aside>
    </main>

    <!-- input method bar floats over the window -->
    <div class="ime">
        <i class="grip"></i>
        <button>中</button>
        <button aria-label="半角"><svg viewBox="0 0 16 16"><path d="M10 1Q14 10 2 12Q7 16 12 12Q17 6 10 1Z" fill="none" stroke="#111" /></svg></button>
        <button aria-label="标点"><svg viewBox="0 0 16 16"><circle cx="4" cy="5" r="2" fill="none" stroke="#111" /><circle cx="11" cy="10" r="2" fill="#111" /><path d="M13 10Q13 14 10 15" fill="none" stroke="#111" stroke-width="1.500" /></svg></button>
        <button aria-label="设置"><svg viewBox="0 0 16 16"><circle cx="8" cy="8" r="5.500" fill="none" stroke="#111" /><circle cx="8" cy="8" r="6.500" fill="none" stroke="#111" stroke-width="2" stroke-dasharray="2 3" /><circle cx="8" cy="8" r="5" fill="#efefef" /><circle cx="8" cy="8" r="2" fill="none" stroke="#111" /></svg></button>
    </div>
</body>

</html>
```

FILE: styles.css
```css
* {
    box-sizing: border-box;
}

body {
    display: flex;
    flex-direction: column;
    height: 100vh;
    margin: 0;
    padding-bottom: 15px;
    background-color: #efefef;
    color: #222;
    font-family: "Open Sans", "Noto Sans CJK SC", sans-serif;
    font-size: 9px;
    line-height: 12px;
    overflow: hidden;
}

button, input, select {
    margin: 0;
    padding: 0;
    border: 0;
    background: none;
    color: inherit;
    font: inherit;
}

h1, h2 {
    margin: 0;
    font-size: 9px;
    font-weight: normal;
}

svg {
    display: block;
    flex: none;
}

.defs {
    position: absolute;
    width: 0;
    height: 0;
}

/* title and menu */
.titlebar, .menubar {
    display: flex;
    align-items: center;
    flex: none;
    padding-left: 1px;
    background-color: #fff;
}

.titlebar {
    height: 17px;
    gap: 4px;
}

.titlebar h1 {
    font-family: Lato, "Noto Sans CJK SC", sans-serif;
    white-space: nowrap;
}

.app-icon {
    width: 11px;
    height: 11px;
}

.window-buttons {
    display: flex;
    gap: 26px;
    margin-left: auto;
    padding-right: 15px;
}

.window-buttons svg {
    width: 8px;
    height: 8px;
}

.menubar {
    height: 16px;
    gap: 9px;
}

.menubar .app-icon {
    margin-right: -4px;
}

.menubar a {
    color: #111;
    text-decoration: none;
}

.mdi-buttons {
    display: flex;
    gap: 1px;
    margin-left: auto;
}

.mdi-buttons button {
    display: flex;
    align-items: center;
    justify-content: center;
    width: 10px;
    height: 10px;
    border: 1px solid #eee;
}

.mdi-buttons svg {
    width: 6px;
    height: 6px;
}

/* toolbars */
.toolbars {
    display: flex;
    flex: none;
}

.file-tools {
    height: 31px;
    border-bottom: 2px solid #e2e2e2;
}

.model-tools {
    height: 33px;
    border-bottom: 1px solid #c8c8c8;
}

.toolbar {
    display: flex;
    align-items: center;
    padding-left: 7px;
    position: relative;
}

.toolbar + .toolbar {
    margin-left: 1px;
    padding-left: 6px;
    border-left: 1px solid #c4c4c4;
}

.toolbar::before {
    content: "";
    position: absolute;
    left: 2px;
    top: 3px;
    bottom: 3px;
    border-left: 1px dotted #aaa;
}

.toolbar button {
    display: flex;
    align-items: center;
    justify-content: center;
    width: 30px;
    height: 30px;
}

.toolbar button > svg {
    width: 20px;
    height: 20px;
}

.toolbar button > .wide {
    width: 24px;
}

.toolbar .on {
    background-color: #c0dcf3;
    border: 1px solid #a9cdec;
}

.sep {
    flex: none;
    width: 1px;
    height: 26px;
    margin: 0 3px 0 2px;
    background-color: #d4d4d4;
}

.toolbar .sep.first {
    margin: 0 2px;
}

.view-toolbar {
    flex: 1;
}

.toolbar .more {
    width: 10px;
    margin-left: auto;
    font-size: 10px;
}

.cad {
    fill: #8a2c0c;
    font-family: "Liberation Serif", serif;
    font-size: 9px;
    font-weight: bold;
}

/* docks */
.workspace {
    display: grid;
    grid-template-columns: 212px minmax(0, 1fr) 212px;
    gap: 2px;
    flex: 1;
    min-height: 0;
}

.dock {
    display: flex;
    flex-direction: column;
    min-width: 0;
    min-height: 0;
}

.dock-title {
    display: flex;
    align-items: center;
    flex: none;
    height: 15px;
    gap: 7px;
    padding: 0 4px 0 2px;
    background-color: #d9d9d9;
    border: 1px solid #c0c0c0;
}

.dock-title h2 {
    flex: 1;
}

.dock-title svg {
    width: 8px;
    height: 8px;
}

.dock-body {
    flex: 1;
    min-height: 0;
    border: 1px solid #a8a8b0;
}

/* project tree */
.tree-body {
    display: grid;
    grid-template-columns: 1fr 12px;
    border-top: 0;
    background-color: #fff;
}

.tree {
    display: grid;
    grid-auto-rows: 1fr;
    margin: 0;
    padding: 0 0 4px;
    list-style-type: none;
}

.tree li, .tree label {
    display: flex;
    align-items: center;
    gap: 3px;
    min-height: 0;
}

.tree li {
    line-height: 13px;
    white-space: nowrap;
}

.tree svg {
    width: 12px;
    height: 11px;
}

.leaf {
    margin-left: 44px;
    padding-left: 1px;
}

.branch {
    padding-left: 17px;
}

.selected {
    background-color: #cce8ff;
}

.toggle {
    width: 10px;
    height: 8px;
}

.toggle.open::before, .arrow::before, .select::after {
    content: "";
    display: block;
    width: 5px;
    height: 5px;
    border: solid #555;
    border-width: 0 1px 1px 0;
    transform: rotate(45deg);
}

.scrollbar {
    display: flex;
    flex-direction: column;
    justify-content: flex-end;
    background-color: #f0f0f0;
}

.arrow {
    display: flex;
    align-items: center;
    justify-content: center;
    height: 12px;
}

.arrow.up {
    margin-bottom: auto;
}

.arrow.up::before {
    transform: rotate(225deg);
}

.thumb {
    height: 28px;
    background-color: #cdcdcd;
}

/* check boxes */
input[type="checkbox"] {
    appearance: none;
    display: block;
    flex: none;
    width: 10px;
    height: 10px;
    background-color: #fff;
    border: 1px solid #666;
}

input[type="checkbox"]:checked::after {
    content: "";
    display: block;
    width: 6px;
    height: 3px;
    margin: 1px;
    border: solid #333;
    border-width: 0 0 1px 1px;
    transform: rotate(-45deg);
}

/* model view and lower docks */
.center {
    display: flex;
    flex-direction: column;
    gap: 4px;
    min-height: 0;
    padding-right: 1px;
}

.viewport {
    flex: 1;
    min-height: 0;
    background: linear-gradient(#e5e5e5, #dde9e9 30%, #d3f4f4 65%, #caffff);
}

.car {
    width: 100%;
    height: 100%;
}

.axis {
    font-size: 7px;
}

.lower {
    display: grid;
    grid-template-columns: 359fr 409fr;
    gap: 3px;
    height: 112px;
}

.log {
    margin: 0;
    padding: 1px 2px;
    background-color: #fff;
    font-family: inherit;
    font-size: 8px;
    line-height: 10px;
    overflow: hidden;
}

.tabs {
    display: flex;
    flex: none;
    height: 14px;
}

.tabs button {
    padding: 0 7px;
    border: 1px solid #e4e4e4;
    border-top: 0;
    font-size: 8px;
}

.tabs .active {
    background-color: #fff;
}

/* parameters */
.params-body {
    flex: 1;
    min-height: 0;
    padding: 7px 9px 8px 7px;
    background-color: #fff;
}

table {
    width: 100%;
    height: 100%;
    table-layout: fixed;
    border-collapse: collapse;
    border: 1px solid #a0a0a5;
    font-family: Lato, "Noto Sans CJK SC", sans-serif;
}

th, td {
    padding: 0;
    border: 1px solid #ddd;
    font-weight: normal;
}

th {
    height: 18px;
}

td {
    height: 21px;
}

td:first-child {
    padding-left: 2px;
}

td:last-child {
    padding: 0 5px 0 4px;
}

.group td {
    background-color: #a0a0a4;
    border-color: #b4b4b8;
}

td input[type="text"], .select, td button {
    display: block;
    width: 100%;
    height: 16px;
    border: 1px solid #888;
    background-color: #fff;
}

td input[type="text"] {
    padding: 0 1px;
}

.select {
    display: flex;
    align-items: center;
    padding-right: 4px;
}

.select select {
    flex: 1;
    min-width: 0;
    padding-left: 2px;
    appearance: none;
}

.select.clipped select {
    padding-left: 0;
}

.select::after {
    flex: none;
    margin-bottom: 2px;
}

td button {
    background-color: #e1e1e1;
    border-color: #adadad;
}

td button:disabled {
    background-color: #ccc;
    border-color: #bfbfbf;
    color: #888;
}

.params td.threads {
    padding-right: 0;
}

.threads div {
    display: flex;
    align-items: center;
    gap: 3px;
    padding-left: 1px;
}

.threads input[type="text"] {
    flex: 1;
    min-width: 0;
    margin-left: 3px;
    border-right: 0;
}

/* input method bar */
.ime {
    position: absolute;
    right: 216px;
    bottom: 1px;
    display: flex;
    align-items: center;
    gap: 8px;
    height: 24px;
    padding: 0 6px 0 4px;
    background-color: #efefef;
}

.ime button {
    font-size: 15px;
    line-height: 20px;
}

.ime svg {
    width: 16px;
    height: 16px;
}

.grip {
    width: 3px;
    height: 12px;
    background-color: #ccc;
}
```
